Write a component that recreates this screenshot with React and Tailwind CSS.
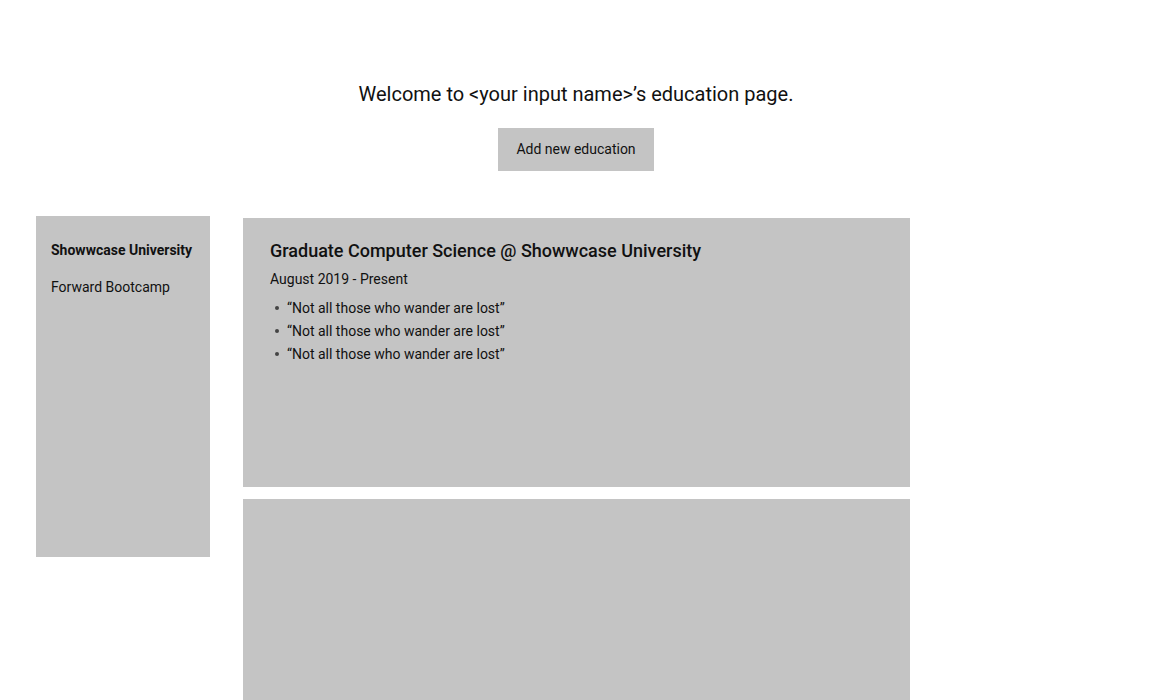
const bullets = [
  "“Not all those who wander are lost”",
  "“Not all those who wander are lost”",
  "“Not all those who wander are lost”",
];

const Sidebar = () => (
  <aside className="h-[341px] w-[174px] shrink-0 bg-[#c4c4c4] px-[15px] pt-[25px]">
    <p className="text-[14px] font-bold leading-[18px] text-[#111]">Showwcase University</p>
    <p className="mt-[19px] text-[14px] leading-[18px] text-[#111]">Forward Bootcamp</p>
  </aside>
);

const EducationCard = ({ title, period, points }) => (
  <div className="h-[269px] w-[667px] bg-[#c4c4c4] px-[27px] pt-[22px]">
    {title && (
      <>
        <h2 className="text-[18px] font-medium leading-[22px] text-[#111]">{title}</h2>
        <p className="mt-[8px] text-[14px] leading-[18px] text-[#111]">{period}</p>
        <ul className="mt-[11px] flex flex-col gap-[5px]">
          {points.map((point, i) => (
            <li key={i} className="flex items-center text-[14px] leading-[18px] text-[#111]">
              <span className="ml-[5px] mr-[8px] h-[4px] w-[4px] rounded-full bg-[#444]" />
              {point}
            </li>
          ))}
        </ul>
      </>
    )}
  </div>
);

export default function App() {
  return (
    <div className="h-[700px] overflow-hidden bg-white font-['Roboto',sans-serif]">
      <div className="flex flex-col items-center pt-[82px]">
        <h1 className="text-[20px] leading-[24px] text-[#111]">
          Welcome to &lt;your input name&gt;’s education page.
        </h1>
        <button
          type="button"
          className="mt-[22px] h-[43px] w-[156px] bg-[#c4c4c4] text-[14px] text-[#111]"
        >
          Add new education
        </button>
      </div>
      <div className="mt-[45px] flex items-start pl-[36px]">
        <Sidebar />
        <div className="ml-[33px] mt-[2px] flex flex-col gap-[12px]">
          <EducationCard
            title="Graduate Computer Science @ Showwcase University"
            period="August 2019 - Present"
            points={bullets}
          />
          <EducationCard />
        </div>
      </div>
    </div>
  );
}
